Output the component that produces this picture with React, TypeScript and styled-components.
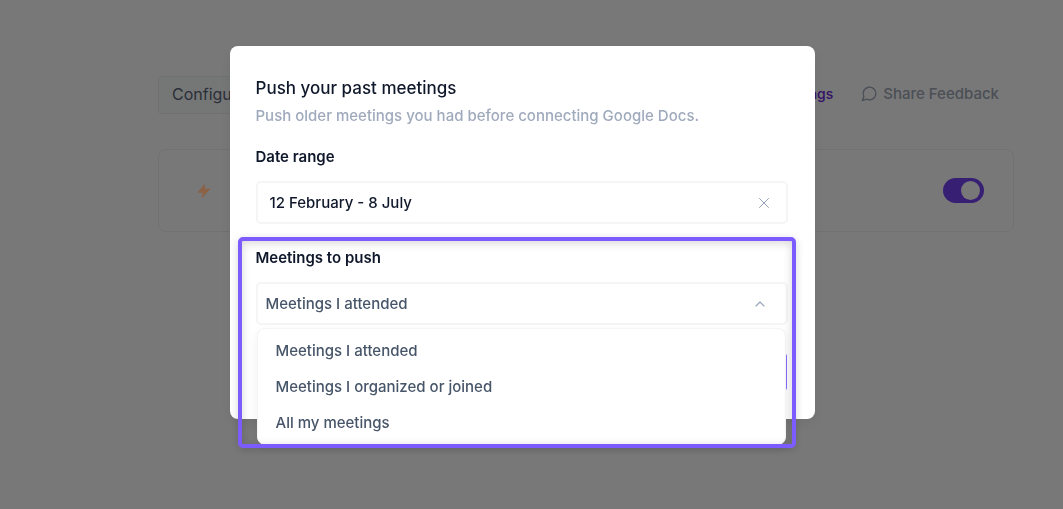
import React, { useState } from "react";
import styled, { createGlobalStyle } from "styled-components";

const Global = createGlobalStyle`
  *, *::before, *::after { box-sizing: border-box; }
  body { margin: 0; background: #ffffff; font-family: Inter, "Liberation Sans", sans-serif; font-size: 15px; font-weight: 500; line-height: 24px; color: #0f172a; }
  button, input, select { font: inherit; color: inherit; }
  h2, p, ul { margin: 0; padding: 0; }
`;

const Page = styled.main`
  min-height: 100vh;
  padding: 76px 49px 0 158px;
`;

const Toolbar = styled.header`
  display: flex;
  justify-content: space-between;
  align-items: center;
  height: 38px;
  padding-right: 15px;
`;

const ConfigButton = styled.button`
  height: 38px;
  padding: 0 13px 2px;
  border: 1px solid #e9edf0;
  border-radius: 4px;
  background: #f8fcfd;
  color: #5c6478;
  font-size: 16px;
  font-weight: 400;
`;

const Links = styled.nav`
  display: flex;
  align-items: center;
  gap: 28px;
  padding-bottom: 3px;
`;

const PageLink = styled.a<{ $muted?: boolean }>`
  display: flex;
  align-items: center;
  gap: 5px;
  color: ${(p) => (p.$muted ? "#a0a8b8" : "#6d28d9")};
  font-size: ${(p) => (p.$muted ? 15 : 14)}px;
  text-decoration: none;
`;

const IntegrationCard = styled.section`
  display: flex;
  justify-content: space-between;
  align-items: center;
  height: 83px;
  margin-top: 35px;
  padding: 0 29px 0 38px;
  border: 1px solid #f0f0f2;
  border-radius: 8px;
`;

const Bolt = styled.svg`
  position: relative;
  z-index: 2;
  flex: none;
`;

const Toggle = styled.input`
  appearance: none;
  display: flex;
  width: 41px;
  height: 25px;
  margin: 0;
  padding: 3px 4px;
  border-radius: 13px;
  background: #7542f7;
  justify-content: flex-end;
  &::before {
    content: "";
    width: 19px;
    height: 19px;
    border-radius: 50%;
    background: #ffffff;
  }
`;

const Backdrop = styled.div`
  position: fixed;
  inset: 0;
  z-index: 1;
  display: flex;
  justify-content: center;
  align-items: flex-start;
  padding: 46px 19px 0 0;
  background: rgba(0, 0, 0, 0.53);
`;

const Dialog = styled.section`
  width: 100%;
  max-width: 585px;
  padding: 30px 27px 29px 26px;
  border-radius: 8px;
  background: #ffffff;
  box-shadow: 0 4px 16px rgba(0, 0, 0, 0.08);
`;

const Title = styled.h2`
  font-size: 17px;
  font-weight: 500;
  line-height: 24px;
`;

const Subtitle = styled.p`
  margin-top: 4px;
  color: #a0aabd;
`;

const Field = styled.div`
  position: relative;
  margin-top: 16px;
  & + & {
    margin-top: 21px;
  }
`;

const Label = styled.label`
  display: block;
  font-weight: 600;
  line-height: 26px;
`;

const Control = styled.div`
  position: relative;
  display: flex;
  align-items: center;
  height: 43px;
  margin-top: 11px;
  border: 2px solid #f5f5f6;
  border-radius: 5px;
`;

const DateInput = styled.input`
  flex: 1;
  min-width: 0;
  height: 100%;
  padding: 0 12px;
  border: 0;
  background: transparent;
`;

const ClearButton = styled.button`
  display: flex;
  margin-right: 15px;
  padding: 0;
  border: 0;
  background: transparent;
  color: #94a3b8;
`;

const Select = styled.select`
  appearance: none;
  width: 100%;
  height: 100%;
  padding: 0 8px;
  border: 0;
  background: transparent;
  color: #475569;
`;

const Chevron = styled.svg`
  position: absolute;
  right: 20px;
  color: #94a3b8;
  pointer-events: none;
`;

const Menu = styled.ul`
  position: absolute;
  top: 100%;
  left: 1px;
  right: 2px;
  z-index: 1;
  margin-top: 3px;
  padding: 4px 0 3px;
  border: 1px solid #f5f5f6;
  border-radius: 8px;
  background: #ffffff;
  box-shadow: 0 4px 12px rgba(0, 0, 0, 0.06);
  list-style: none;
`;

const MenuItem = styled.button`
  display: block;
  width: 100%;
  height: 36px;
  padding: 0 18px;
  border: 0;
  background: transparent;
  color: #475569;
  text-align: left;
`;

const Highlight = styled.div`
  position: absolute;
  inset: -8px -8px -123px -18px;
  z-index: 2;
  border: 4px solid #7c5cff;
  border-radius: 5px;
  box-shadow: 0 2px 8px rgba(0, 0, 0, 0.16), inset 0 2px 10px rgba(0, 0, 0, 0.16);
  pointer-events: none;
`;

const Actions = styled.div`
  display: flex;
  justify-content: flex-end;
  margin-top: 29px;
  padding-right: 1px;
`;

const SubmitButton = styled.button`
  width: 120px;
  height: 36px;
  border: 0;
  border-radius: 2px;
  background: #8b6cff;
`;

const choices = ["Meetings I attended", "Meetings I organized or joined", "All my meetings"];

export default function App() {
  const [range, setRange] = useState("12 February - 8 July");
  const [choice, setChoice] = useState(choices[0]);

  return (
    <>
      <Global />
      <Page>
        <Toolbar>
          <ConfigButton>Configure</ConfigButton>
          <Links>
            <PageLink href="#meetings">Meetings</PageLink>
            <PageLink href="#feedback" $muted>
              <svg width="17" height="17" viewBox="0 0 24 24" fill="none" stroke="currentColor" strokeWidth="2" strokeLinecap="round" strokeLinejoin="round">
                <path d="M7.9 20A9 9 0 1 0 4 16.1L2 22Z" />
              </svg>
              Share Feedback
            </PageLink>
          </Links>
        </Toolbar>
        <IntegrationCard>
          <Bolt width="14" height="14" viewBox="1 1 22 22" fill="#8c6246" stroke="#8c6246" strokeWidth="1.5" strokeLinejoin="round">
            <path d="M13 2 3 14h8l-2 8 12-13h-9Z" />
          </Bolt>
          <Toggle type="checkbox" role="switch" defaultChecked aria-label="Enable integration" />
        </IntegrationCard>
      </Page>
      <Backdrop>
        <Dialog role="dialog" aria-labelledby="dialog-title">
          <Title id="dialog-title">Push your past meetings</Title>
          <Subtitle>Push older meetings you had before connecting Google Docs.</Subtitle>
          <Field>
            <Label htmlFor="range">Date range</Label>
            <Control>
              <DateInput id="range" value={range} onChange={(e) => setRange(e.target.value)} />
              <ClearButton aria-label="Clear date range" onClick={() => setRange("")}>
                <svg width="14" height="14" viewBox="0 0 14 14" fill="none" stroke="currentColor" strokeWidth="1" strokeLinecap="round">
                  <path d="m2.5 2.5 9 9m0-9-9 9" />
                </svg>
              </ClearButton>
            </Control>
          </Field>
          <Field>
            <Label htmlFor="meetings">Meetings to push</Label>
            <Control>
              <Select id="meetings" value={choice} onChange={(e) => setChoice(e.target.value)}>
                {choices.map((c) => (
                  <option key={c}>{c}</option>
                ))}
              </Select>
              <Chevron width="12" height="12" viewBox="0 0 12 12" fill="none" stroke="currentColor" strokeWidth="1.1" strokeLinecap="round" strokeLinejoin="round">
                <path d="m2 8 4-4 4 4" />
              </Chevron>
            </Control>
            <Menu>
              {choices.map((c) => (
                <li key={c}>
                  <MenuItem onClick={() => setChoice(c)}>{c}</MenuItem>
                </li>
              ))}
            </Menu>
            <Highlight />
          </Field>
          <Actions>
            <SubmitButton aria-label="Push meetings" />
          </Actions>
        </Dialog>
      </Backdrop>
    </>
  );
}
